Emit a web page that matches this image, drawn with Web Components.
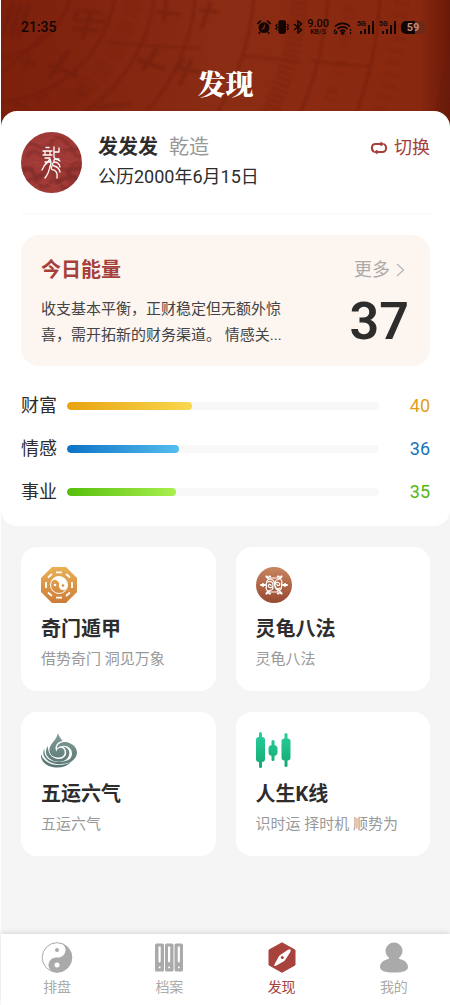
<!DOCTYPE html>
<html lang="zh-CN">
<head>
<meta charset="utf-8">
<meta name="viewport" content="width=device-width, initial-scale=1">
<title>发现</title>
<style>
  html, body { margin: 0; }
  body {
    min-height: 100vh;
    display: flex;
    flex-direction: column;
    background: #f5f5f5;
    color: #2d2d2d;
    font-family: Roboto, "Noto Sans CJK SC", sans-serif;
  }
  discover-page { flex: 1; }
</style>
</head>
<body>
<discover-page></discover-page>
<script>
const define = (name, html, setup) => customElements.define(name, class extends HTMLElement {
  constructor() {
    super();
    const t = document.createElement('template');
    t.innerHTML = html;
    this.attachShadow({ mode: 'open' }).append(t.content.cloneNode(true));
  }
  connectedCallback() { if (setup) setup(this, this.shadowRoot); }
});

/* Device status line */
define('status-bar', `
<style>
  :host { display: flex; justify-content: space-between; align-items: center; height: 20px; padding: 0 25px 0 20px; color: #120503; }
  time { font-size: 14px; font-weight: 500; line-height: 20px; }
  .icons { display: flex; align-items: center; gap: 4px; }
  svg { display: block; }
  .speed { text-align: center; font-weight: 500; font-size: 11px; line-height: 10px; }
  .speed small { display: block; font-size: 7px; line-height: 7px; }
  .battery { width: 24px; height: 13px; border-radius: 5px; background: linear-gradient(90deg, #120503 60%, #6b2a1a 60%); color: #c58a78; font-size: 11px; font-weight: 700; line-height: 13px; text-align: center; }
</style>
<time>21:35</time>
<div class="icons">
  <svg width="14" height="14" viewBox="0 0 14 14" fill="currentColor"><circle cx="7" cy="7.6" r="5.4"/><path d="M.6 4A8 8 0 0 1 4 .8M13.4 4A8 8 0 0 0 10 .8M3 12l-1.3 1.7M11 12l1.3 1.7" stroke="currentColor" stroke-width="1.7" fill="none"/><path d="M7.6 4.6 7 8 4.8 9.4" stroke="#8a2a12" stroke-width="1.2" fill="none"/></svg>
  <svg width="14" height="14" viewBox="0 0 14 14" fill="none" stroke="currentColor" stroke-width="1.2"><rect x="4" y=".8" width="6.4" height="12.4" rx="1.4" fill="currentColor"/><path d="m2.4 4-1.6 1.5L2.4 7 .8 8.500l1.6 1.500M12 4l1.500 1.500L12 7l1.500 1.500L12 10"/></svg>
  <svg width="10" height="14" viewBox="0 0 10 14" fill="none" stroke="currentColor" stroke-width="1.5"><path d="m1 4 7.500 6L5 13V1l3.500 3L1 10"/></svg>
  <div class="speed">9.00<small>KB/S</small></div>
  <svg width="20" height="15" viewBox="0 0 20 15" fill="none" stroke="currentColor" stroke-width="1.7"><path d="M2 6.500a10.500 10.500 0 0 1 15 0M4.600 9a7 7 0 0 1 10 0M7 11.300a4 4 0 0 1 5.400 0"/><circle cx="9.700" cy="13" r="1" fill="currentColor"/><path d="M3 9.500a2 2 0 0 0-1.500 3 1.200 1.200 0 1 0 1.300-1.200M17.500 9v2M17.500 12v2" stroke-width="1.200"/></svg>
  <svg width="18" height="15" viewBox="0 0 18 15" fill="currentColor"><text x="0" y="6" font-size="7" font-weight="700">5G</text><path d="M3 11h2v3H3zM7 9h2v5H7zM11 5h2v9h-2zM15 1h2v13h-2z"/></svg>
  <svg width="18" height="15" viewBox="0 0 18 15" fill="currentColor"><text x="0" y="6" font-size="7" font-weight="700">5G</text><path d="M3 11h2v3H3zM7 9h2v5H7zM11 5h2v9h-2zM15 1h2v13h-2z"/></svg>
  <div class="battery">59</div>
</div>`);

/* Engraved compass backdrop with the page title */
define('page-header', `
<style>
  :host { display: grid; background: #87270f; padding-bottom: 20px; overflow: hidden; }
  .backdrop, .front { grid-area: 1 / 1; min-width: 0; }
  .backdrop { width: 100%; height: 131px; margin-bottom: -20px; display: block; }
  .front { padding-top: 17px; z-index: 1; }
  h1 { margin: 28px 0 0; height: 36px; line-height: 36px; text-align: center; font-size: 28px; font-weight: 900; color: #fff; font-family: "Noto Serif CJK SC", "Noto Serif SC", "Source Han Serif SC", serif; }
</style>
<svg class="backdrop" viewBox="0 0 450 131" preserveAspectRatio="xMidYMin slice" aria-hidden="true">
  <defs>
    <filter id="soft"><feGaussianBlur stdDeviation="1"/></filter>
    <linearGradient id="shade"><stop offset="0" stop-color="#7c200c"/><stop offset=".5" stop-color="#8b2c14"/><stop offset=".93" stop-color="#88280f"/><stop offset="1" stop-color="#6a1a09"/></linearGradient>
  </defs>
  <rect width="450" height="131" fill="url(#shade)"/>
  <g filter="url(#soft)" fill="none" stroke="#6a1a0a" opacity=".5">
    <g stroke-width="2">
      <circle cx="-8" cy="-22" r="80"/><circle cx="-8" cy="-22" r="124"/><circle cx="-8" cy="-22" r="163"/>
      <circle cx="-8" cy="-22" r="204"/><circle cx="-8" cy="-22" r="262"/><circle cx="-8" cy="-22" r="336"/><circle cx="-8" cy="-22" r="388"/>
    </g>
    <circle cx="-8" cy="-22" r="308" stroke-width="16" stroke-dasharray="2 4" opacity=".7"/>
    <circle cx="-8" cy="-22" r="410" stroke-width="14" stroke-dasharray="3 9" opacity=".35"/>
    <circle cx="-8" cy="-22" r="358" stroke-width="9" stroke-dasharray="6 5 2 15" opacity=".35"/>
    <circle cx="-8" cy="-22" r="143" stroke-width="16" stroke-dasharray="2 3 5 4 1 8" opacity=".35"/>
    <circle cx="-8" cy="-22" r="468" stroke-width="12"/>
    <path d="m12 4-9 29M20 4l-9 31M28 5l-10 32" stroke-width="4"/>
    <path d="m107 42 45 4 48 2M310 61l62 6M0 74l45-40M240 55l60 7" stroke-width="1.500"/>
    <path d="m48 65 29 11M68 51 49 78M137 60l28 9M157 48l-15 22" stroke-width="4"/>
    <path d="m73 20 32 2M78 10l-5 10M84 11l17 2M91 11l-9 28M72 29l25 1M178 68l21 4M184 58l-9 14M191 60l-12 25M156 12l24 2M166 0l-3 22M200 10l18 2M210 2l-9 27" stroke-width="3"/>
    <path d="m20 60 16 5M29 53l-6 15M12 102l14 5M35 100l12-5M75 91l12 4M82 84l-5 12M95 108l36-4" stroke-width="3" opacity=".7"/>
  </g>
</svg>
<div class="front"><status-bar></status-bar><h1><slot></slot></h1></div>`);

define('profile-row', `
<style>
  :host { display: flex; align-items: flex-start; gap: 16px; padding-bottom: 20px; border-bottom: 1px solid #f8f8f8; }
  .avatar { width: 61px; height: 61px; flex: none; }
  .info { flex: 1; }
  h2 { margin: 0; display: flex; gap: 11px; font-size: 20px; line-height: 30px; font-weight: 700; }
  h2 span { font-weight: 400; color: #999; }
  p { margin: 0; font-size: 18px; line-height: 30px; }
  button { display: flex; align-items: center; gap: 6px; border: 0; background: none; padding: 0; color: #a5403b; font: inherit; font-size: 18px; line-height: 32px; }
</style>
<svg class="avatar" viewBox="0 0 61 61" role="img" aria-label="头像">
  <defs><clipPath id="c"><circle cx="30.500" cy="30.500" r="30.500"/></clipPath><filter id="b"><feGaussianBlur stdDeviation="1"/></filter></defs>
  <g clip-path="url(#c)">
    <rect width="61" height="61" fill="#a03a37"/>
    <g filter="url(#b)" fill="none" stroke="#712523" stroke-width="2" opacity=".6">
      <path d="M0 16q8-8 17-2t14-4 16 2 14-2M5 25q6-9 14-3t10-2M42 20q7-6 11 1t8 1M0 41q10-7 14 2t10-4 9 6M38 34q7 8 13 0t10 2M4 51q8-8 13 0t12 0 11 2 17-8"/>
      <path d="M0 37h10l5 9 7-4M47 38l14-2v12L48 43zM35 52q8-9 16-4" stroke-width="4"/>
    </g>
    <g fill="none" stroke="#c35a55" opacity=".3"><path d="M10 8q8 6 15 0t14 3 13-1M8 32q7-5 12 1M43 28q8 4 14-2M12 56q8-9 16-4t18-4"/></g>
  </g>
  <g fill="none" stroke="#fff" stroke-width="1.300" stroke-linecap="round" stroke-linejoin="round">
    <path d="M25 15.500h3M22 19h9M24 19v3M29 19v3M22 23h9M24 26h5M24 30h5M23 34l6-7q2 4 0 8M27 30q-4 3-6 8M29 34q-1 7-5 12M33 15v10q0 2 5 2M33 20h5v-4M39 29q-7-4-6 1 5 0 6 5M33 30q-3 2 0 4 5 1 6 6M31 34q-2 4 2 4 4 2 3 8"/>
  </g>
</svg>
<div class="info"><h2><slot></slot><span><slot name="kind"></slot></span></h2><p><slot name="date"></slot></p></div>
<button type="button">
  <svg width="18" height="16" viewBox="0 0 18 16" fill="none" stroke="currentColor" stroke-width="2"><path d="M4 12C1 10 1 4 5.500 4H11M14 4c3 2 3 8-1.500 8H7"/><path d="m10.500 1.500 4 2.500-4 2.500zM7.500 9.500l-4 2.500 4 2.500z" fill="currentColor" stroke="none"/></svg>
  切换
</button>`);

define('energy-card', `
<style>
  :host { display: block; background: #fdf5f0; border-radius: 18px; padding: 21px 21px 18px 20px; }
  header { display: flex; justify-content: space-between; align-items: center; margin-bottom: 12px; }
  h3 { margin: 0; font-size: 20px; line-height: 28px; font-weight: 700; color: #a5403b; }
  a { display: flex; align-items: center; gap: 6px; margin-right: 4px; color: #aaa; font-size: 18px; line-height: 28px; text-decoration: none; }
  .row { display: flex; justify-content: space-between; align-items: center; }
  p { margin: 0; width: 248px; font-size: 15px; line-height: 26px; color: #444; }
  strong { font-size: 52px; line-height: 52px; font-weight: 600; }
</style>
<header><h3><slot name="title"></slot></h3><a href="#more">更多<svg width="9" height="14" viewBox="0 0 9 14" fill="none" stroke="#b5b8c0" stroke-width="1.300"><path d="m1 1 6.500 6L1 13"/></svg></a></header>
<div class="row"><p><slot></slot></p><strong><slot name="score"></slot></strong></div>`);

define('score-bar', `
<style>
  :host { display: grid; grid-template-columns: 36px 1fr 41px; column-gap: 10px; align-items: center; height: 43px; font-size: 18px; line-height: 24px; }
  progress { appearance: none; display: block; width: 100%; height: 8px; border: 0; border-radius: 4px; overflow: hidden; background: #f8f8f8; }
  progress::-webkit-progress-bar { background: #f8f8f8; border-radius: 4px; }
  progress::-webkit-progress-value { background: linear-gradient(90deg, var(--from), var(--to)); border-radius: 4px; }
  output { text-align: right; color: var(--ink); }
</style>
<label for="p"><slot></slot></label><progress id="p" max="100"></progress><output></output>`,
(el, root) => {
  root.querySelector('progress').value = el.getAttribute('value');
  root.querySelector('output').textContent = el.getAttribute('value');
});

define('feature-card', `
<style>
  :host { display: block; min-width: 0; }
  a { display: block; background: #fff; border-radius: 16px; padding: 20px 20px 22px; color: inherit; text-decoration: none; }
  .icon { display: flex; height: 36px; }
  h3 { margin: 12px 0 6px; font-size: 20px; line-height: 28px; font-weight: 700; }
  p { margin: 0; font-size: 15px; line-height: 20px; color: #999; white-space: nowrap; }
</style>
<a href="#feature"><div class="icon"><slot name="icon"></slot></div><h3><slot></slot></h3><p><slot name="note"></slot></p></a>`);

define('tab-item', `
<style>
  :host { display: block; flex: 1; }
  a { display: flex; flex-direction: column; align-items: center; gap: 4px; color: #aaa; font-size: 14px; line-height: 20px; text-decoration: none; }
  :host([current]) a { color: #a5403b; }
</style>
<a href="#tab"><slot name="icon"></slot><span><slot></slot></span></a>`);

define('tab-bar', `
<style>
  :host { display: flex; background: #fff; box-shadow: 0 -1px 6px rgba(0,0,0,.13); padding: 8px 0; }
  svg { display: block; }
</style>
<tab-item><svg slot="icon" width="32" height="31" viewBox="0 0 32 31"><circle cx="16" cy="15.500" r="14.800" fill="#fff" stroke="#aaa"/><path d="M16 .5a15 15 0 0 1 0 30 7.500 7.500 0 0 1 0-15 7.500 7.500 0 0 0 0-15z" fill="#aaa" transform="rotate(8 16 15.500)"/><circle cx="16" cy="8" r="2" fill="#aaa"/><circle cx="16" cy="23" r="2.500" fill="#fff"/></svg>排盘</tab-item>
<tab-item><svg slot="icon" width="30" height="31" viewBox="0 0 30 31"><g fill="#aaa"><rect x="1" y="1.500" width="9" height="28" rx="1.500"/><rect x="11" y="1.500" width="8.500" height="28" rx="1.500"/><rect x="20.500" y="1.500" width="8.500" height="28" rx="1.500"/></g><path d="M4.500 4.500h2.200v15l-1.100 1.200-1.100-1.200zM14 4.500h2.200v15l-1.100 1.200-1.100-1.200zM23.700 4.500h2.200v15l-1.100 1.200-1.100-1.200zM4.800 24.500h1.700v1.800H4.800zM14.300 24.500H16v1.800h-1.700zM24 24.500h1.700v1.800H24z" fill="#fff"/></svg>档案</tab-item>
<tab-item current><svg slot="icon" width="28" height="31" viewBox="0 0 28 31"><path d="M14 .8 27 8v15L14 30.300 1 23V8z" fill="#a8423c" stroke="#a8423c" stroke-linejoin="round"/><path d="M22.500 7.500q.7 1-.5 3l-4.500 7q-.5 1-2 2L8 23.800q-2.500 1-1.500-1.500l4-7.300q.7-1.300 2-2.200l7.500-5q1.800-1 2.500-.3z" fill="#fff"/><circle cx="14.300" cy="15.500" r="1.500" fill="#a8423c"/></svg>发现</tab-item>
<tab-item><svg slot="icon" width="30" height="31" viewBox="0 0 30 31" fill="#aaa"><circle cx="15" cy="9" r="8.500"/><path d="M10.500 15h9l1 2C26 18 29 21.500 29 25q0 5.500-14 5.500T1 25c0-3.500 3-7 8.500-8z"/></svg>我的</tab-item>`);

define('discover-page', `
<style>
  :host { display: flex; flex-direction: column; border-left: 1px solid #fdfdfd; }
  .summary { background: #fff; border-radius: 16px; margin-top: -20px; padding: 21px 20px 13px; z-index: 1; }
  energy-card { margin: 21px 0 18px; }
  .features { flex: 1; display: grid; grid-template-columns: 1fr 1fr; align-content: start; gap: 21px 20px; padding: 21px 20px; }
  svg { display: block; }
</style>
<page-header>发现</page-header>
<section class="summary">
  <profile-row>发发发<span slot="kind">乾造</span><span slot="date">公历2000年6月15日</span></profile-row>
  <energy-card><span slot="title">今日能量</span>收支基本平衡，正财稳定但无额外惊喜，需开拓新的财务渠道。 情感关...<span slot="score">37</span></energy-card>
  <score-bar value="40" style="--from:#e8a30f;--to:#f8d84e;--ink:#dfa01c">财富</score-bar>
  <score-bar value="36" style="--from:#0c72c6;--to:#56bdee;--ink:#1672bd">情感</score-bar>
  <score-bar value="35" style="--from:#55be0b;--to:#a9ef4f;--ink:#53b50f">事业</score-bar>
</section>
<main class="features">
  <feature-card>
    <svg slot="icon" width="36" height="36" viewBox="0 0 36 36"><defs><linearGradient id="g1" x2="0" y2="1"><stop stop-color="#e9b057"/><stop offset="1" stop-color="#cd7c37"/></linearGradient></defs>
      <path d="M11 0h14l11 11v14L25 36H11L0 25V11z" fill="url(#g1)"/>
      <path d="M15 5.300h6M15 30.700h6M5 15v6M31 15v6M7 10.500l4-3.500M25 7l4 3.500M7 25.500l4 3.500M25 29l4-3.500" stroke="#fff" stroke-width="1.800" fill="none"/>
      <circle cx="18" cy="18" r="8.500" fill="none" stroke="#fff"/>
      <path d="M9.500 18a8.500 8.500 0 0 1 17 0 4.250 4.250 0 0 1-8.500 0 4.250 4.250 0 0 0-8.500 0z" fill="#fff" transform="rotate(12 18 18)"/>
      <circle cx="14" cy="18" r="1.300" fill="#fff"/><circle cx="22" cy="18.500" r="1.300" fill="#d99145"/></svg>
    奇门遁甲<span slot="note">借势奇门 洞见万象</span>
  </feature-card>
  <feature-card>
    <svg slot="icon" width="36" height="36" viewBox="0 0 36 36"><defs><linearGradient id="g2" x2="0" y2="1"><stop stop-color="#c98560"/><stop offset="1" stop-color="#97492f"/></linearGradient></defs>
      <circle cx="18" cy="18" r="18" fill="url(#g2)"/>
      <g fill="none" stroke="#fff" stroke-width="1.200" stroke-linecap="round">
        <path d="M10.500 20c-1-5 1-8 4-8M25.500 16c1 5-1 8-4 8M14 11h7c4 0 5 3 5 5M22 25h-7c-4 0-5-3-5-5"/>
        <path d="M15 18.500c-.5-2-3.500-1-2.500 1s4.500 1.500 4.500-1.500-2.500-4.500-5-3M21 17.500c.5 2 3.500 1 2.500-1s-4.500-1.500-4.500 1.500 2.500 4.500 5 3M15 12.500c4 0 3 4 4 7 .5 2 2 3.500 4 3.500M13 23.500c4 0 4-2 4-4M23 12.500c-4 0-4 2-4 4"/>
        <path d="m12 11-1.500-1.500M14 9.500h-.5M24 11l1.500-1.500M22 9.500h.5M12 25l-1.500 1.500M14 26.500h-.5M24 25l1.500 1.500M22 26.500h.5" stroke-width="2.200"/>
        <path d="M5 18h4M27 18h4M7 17v2M29 17v2" stroke-width="2"/>
      </g></svg>
    灵龟八法<span slot="note">灵龟八法</span>
  </feature-card>
  <feature-card>
    <svg slot="icon" width="36" height="36" viewBox="0 0 36 36"><defs><linearGradient id="g3" gradientUnits="userSpaceOnUse" x1="0" y1="0" x2="0" y2="36"><stop stop-color="#829f9b"/><stop offset="1" stop-color="#567471"/></linearGradient></defs>
      <g fill="url(#g3)">
        <path d="M17 1c1 4 3 5.500 4.500 8-6 1-8.500 6-6 10.500C16 16 20 14.500 22.500 17c3 4 0 9-5.500 8.500-5.500 0-9.500-4-8.500-9C9.500 11.500 15.500 8 17 1z"/>
        <path d="M16 16.500c-.5-4.500 5-7.500 11-6 8 2.500 11.500 9.500 7 15.500-3 4-8 6-14 6 6-1.500 11-5 11-10.500 0-5-5-8.500-9.500-7.500-2.500 0-4.500 1-5.500 2.500z"/>
        <path d="M22 14.500c6 1 8 6 5 11-4 6-14 5-18.500 1C4 23 4 18 7 14c-.5 6 3 13 11 13 7 0 10-7 4-12.500z"/>
        <path d="M3.500 16.500C2.500 24 8 30 17 30c5 0 9-1 12-3-3 5-10 6-16 4.500C4 29 0 22 3.500 16.500z"/>
        <path d="M0 22c2 6 8 11 17 11 6 0 10-1 14-4-4 5-10 7-17 6.500C5 34.500-1 29 0 22z"/>
      </g></svg>
    五运六气<span slot="note">五运六气</span>
  </feature-card>
  <feature-card>
    <svg slot="icon" width="36" height="36" viewBox="0 0 36 36"><defs><linearGradient id="g4" gradientUnits="userSpaceOnUse" x1="0" y1="0" x2="0" y2="36"><stop stop-color="#28cf9e"/><stop offset="1" stop-color="#15a86f"/></linearGradient></defs>
      <g fill="url(#g4)"><rect x="3" width="3" height="36" rx="1.500"/><rect y="5" width="9" height="25" rx="3"/><rect x="15.500" y="8" width="3" height="21" rx="1.500"/><rect x="12.500" y="13" width="9" height="11" rx="4"/><rect x="28.500" y="1" width="3" height="34" rx="1.500"/><rect x="25.500" y="6.500" width="9" height="22" rx="3"/></g></svg>
    人生K线<span slot="note">识时运 择时机 顺势为</span>
  </feature-card>
</main>
<tab-bar></tab-bar>`);
</script>
</body>
</html>
